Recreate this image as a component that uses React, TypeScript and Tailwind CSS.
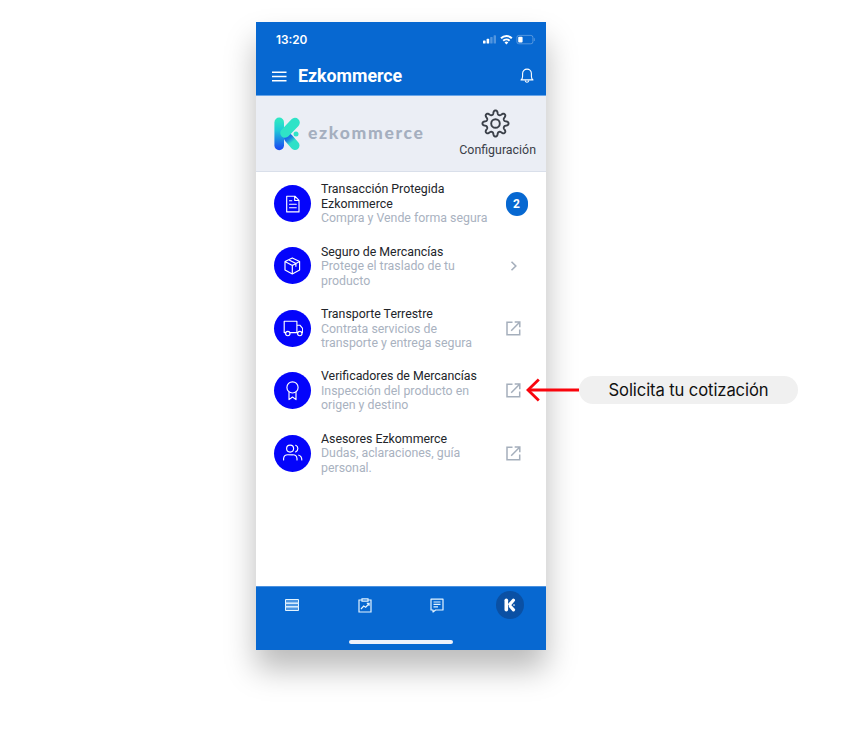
import React from "react";

// Outline of an eight-toothed wheel, teeth flattened at the tips.
const GEAR =
  Array.from({ length: 240 }, (_, i) => {
    const a = (i / 240) * Math.PI * 2;
    const r = 11.15 + (1.95 * Math.tanh(1.5 * Math.cos(8 * a) - 0.15)) / 0.9;
    return `${i ? "L" : "M"}${(14.5 + r * Math.sin(a)).toFixed(2)} ${(14.5 - r * Math.cos(a)).toFixed(2)}`;
  }).join("") + "z";

function StatusIcons() {
  return (
    <svg width="53" height="12" viewBox="0 0 53 12" fill="none">
      <g fill="#fff">
        <rect x="0" y="6.5" width="2.6" height="3" rx=".6" />
        <rect x="3.6" y="4.8" width="2.6" height="4.7" rx=".6" />
        <rect x="7.2" y="3" width="2.4" height="6.5" rx=".6" opacity=".3" />
        <rect x="10.6" y="1.3" width="2.4" height="8.2" rx=".6" opacity=".3" />
      </g>
      <g stroke="#fff" strokeWidth="2">
        <path d="M18 4.3a7.6 7.6 0 0 1 10.8 0" />
        <path d="M20.2 6.8a4.6 4.6 0 0 1 6.4 0" />
      </g>
      <path d="M23.4 10.5l-1.900-2a2.700 2.700 0 0 1 3.800 0z" fill="#fff" />
      <rect x="33.9" y="1.4" width="16" height="8.4" rx="2" stroke="#fff" strokeOpacity=".3" />
      <rect x="35.2" y="2.7" width="4.4" height="5.8" rx="1" fill="#fff" />
      <path d="M51.3 4.2v2.8" stroke="#fff" strokeOpacity=".3" />
    </svg>
  );
}

function Bell() {
  return (
    <svg width="14" height="16" viewBox="0 0 14 16" fill="none" stroke="#fff" strokeWidth="1.1" strokeLinejoin="round" strokeLinecap="round">
      <path d="M1 11.9c1.300-.9 1.600-2 1.600-3.600V5.500a4.400 4.400 0 0 1 8.800 0v2.800c0 1.600.3 2.700 1.600 3.600z" />
      <path d="M5.300 12.900a1.750 1.750 0 0 0 3.400 0" />
    </svg>
  );
}

function Logo() {
  return (
    <svg width="27" height="34" viewBox="0 0 27 34" fill="none" strokeLinecap="round">
      <defs>
        <linearGradient id="stem" gradientUnits="userSpaceOnUse" x1="0" y1="4" x2="0" y2="31">
          <stop offset="0" stopColor="#2ee6c5" />
          <stop offset=".35" stopColor="#20c9d8" />
          <stop offset="1" stopColor="#1a50f0" />
        </linearGradient>
        <linearGradient id="leg" gradientUnits="userSpaceOnUse" x1="13" y1="18" x2="21" y2="28">
          <stop offset="0" stopColor="#1b55ee" />
          <stop offset=".35" stopColor="#1d86df" />
          <stop offset=".7" stopColor="#2ee0c8" />
        </linearGradient>
      </defs>
      <path d="M5.200 5.400v23" stroke="url(#stem)" strokeWidth="9.600" />
      <path d="M14.500 21l6.500 7.500" stroke="url(#leg)" strokeWidth="9" />
      <path d="M21 5.600L11 16" stroke="#2fe3c7" strokeWidth="9.600" />
      <circle cx="22" cy="17" r="2.500" fill="#2fe3c7" />
    </svg>
  );
}

const thin = {
  width: 20,
  height: 20,
  viewBox: "0 0 20 20",
  fill: "none",
  stroke: "#fff",
  strokeWidth: 1.15,
  strokeLinecap: "round" as const,
  strokeLinejoin: "round" as const,
};

const DocIcon = () => (
  <svg {...thin}>
    <path d="M3.700 2.200h8.200l4.100 4.100v11.600h-12.300zM11.700 2.300v4.200h4.200M6.500 6.700h2.300M6.500 10.200h6.800M6.500 13.700h6.800" />
  </svg>
);
const BoxIcon = () => (
  <svg {...thin}>
    <path d="M9.300 1.900l7.300 3.700v8.500l-7.300 3.900-7.300-3.900V5.600zM2 5.600l7.300 3.800 7.300-3.800M9.300 9.400V18M5.600 3.800l7.300 3.800v2.700" />
  </svg>
);
const TruckIcon = () => (
  <svg {...thin}>
    <path d="M2.600 14.600H1.200V3.200h12.700v11.400H7M13.900 7.200h3l2.700 3.300v4.100h-.9M14.800 14.600h-.9" />
    <circle cx="4.800" cy="15.500" r="2.200" />
    <circle cx="16.800" cy="15.500" r="2.200" />
  </svg>
);
const AwardIcon = () => (
  <svg {...thin}>
    <circle cx="9.500" cy="6.400" r="5.600" />
    <path d="M6 11.200v7.400L9.500 16l3.500 2.600v-7.400" />
  </svg>
);
const PeopleIcon = () => (
  <svg {...thin}>
    <circle cx="7.100" cy="5.600" r="3.500" />
    <path d="M.6 17v-1.500a4.200 4.200 0 0 1 4.200-3.700h5a4.200 4.200 0 0 1 4.200 3.700V17M12.700 2.300a3.600 3.600 0 0 1 0 6.600M15.800 12.200c2 .5 3 2 3 4.800" />
  </svg>
);

const Badge = () => (
  <span className="flex h-[24px] w-[22px] items-center justify-center rounded-full bg-[#0768d1] pr-[1px] text-[12px] font-bold text-white">
    2
  </span>
);
const Chevron = () => (
  <svg className="mr-[10px]" width="8" height="12" viewBox="0 0 8 12" fill="none" stroke="#a5afbc" strokeWidth="1.600">
    <path d="M1.500 1.800l4.300 4.200-4.300 4.200" />
  </svg>
);
const OpenIcon = () => (
  <svg className="mr-[7px]" width="15" height="15" viewBox="0 0 15 15" fill="none" stroke="#a5afbc" strokeWidth="1.500">
    <path d="M6.500 1.300H1v12.500h12.700V8.500M8.700 1h5.100v5.200M13.600 1.300L5.200 9.700" />
  </svg>
);

const rows = [
  { icon: <DocIcon />, title: ["Transacción Protegida", "Ezkommerce"], text: ["Compra y Vende forma segura"], end: <Badge /> },
  { icon: <BoxIcon />, title: ["Seguro de Mercancías"], text: ["Protege el traslado de tu", "producto"], end: <Chevron /> },
  { icon: <TruckIcon />, title: ["Transporte Terrestre"], text: ["Contrata servicios de", "transporte y entrega segura"], end: <OpenIcon /> },
  { icon: <AwardIcon />, title: ["Verificadores de Mercancías"], text: ["Inspección del producto en", "origen y destino"], end: <OpenIcon /> },
  { icon: <PeopleIcon />, title: ["Asesores Ezkommerce"], text: ["Dudas, aclaraciones, guía", "personal."], end: <OpenIcon /> },
];

function TabBar() {
  return (
    <footer className="flex h-[64px] flex-col items-center border-t border-[#4b91df] bg-[#0768d1]">
      <div className="flex h-[36px] w-full items-center">
        <div className="flex flex-1 justify-center">
          <svg width="16" height="14" viewBox="0 0 16 14" fill="#4d96e2" stroke="#e4f4ff" strokeWidth="1">
            <path d="M1.500 1.500h13v3.700h-13zM1.500 5.200h13v3.600h-13zM1.500 8.800h13v3.700h-13z" />
          </svg>
        </div>
        <div className="flex flex-1 justify-center">
          <svg width="14" height="15" viewBox="0 0 14 15" fill="none" stroke="#e4f4ff" strokeWidth="1.200">
            <path d="M3.500 2H1v12h12V2h-2.500M4 .8h6v2.400H4zM3 11l2.700-3 2 1.200 3-3.200M8.800 5.400h2.300v2.300" />
          </svg>
        </div>
        <div className="flex flex-1 justify-center">
          <svg width="14" height="15" viewBox="0 0 14 15" fill="none" stroke="#e4f4ff" strokeWidth="1.200" strokeLinejoin="round">
            <path d="M1 1.200h12v10.800H5.600L3 14v-2H1zM3.500 4h7M3.500 6.400h7M3.500 8.800h4.500" />
          </svg>
        </div>
        <div className="flex flex-1 justify-center">
          <span className="flex h-[28px] w-[28px] items-center justify-center rounded-full bg-[#0a50a4]">
            <svg width="12" height="14" viewBox="0 0 12 14" fill="none" stroke="#fff" strokeLinecap="round">
              <path d="M2.300 2.200v9.500" strokeWidth="3.600" />
              <path d="M9.400 2.200L5.800 6.400M6.500 8.500l3 3.300" strokeWidth="3.200" />
              <circle cx="10" cy="7.100" r=".8" fill="#fff" stroke="none" />
            </svg>
          </span>
        </div>
      </div>
      <div className="mt-[17px] h-[4px] w-[104px] rounded-full bg-[#eef1fa]" />
    </footer>
  );
}

export default function App() {
  return (
    <div className="relative flex h-[731px] w-[849px] bg-white font-['Roboto',sans-serif]">
      <main className="mt-[22px] ml-[256px] flex h-[628px] w-[290px] flex-col bg-white shadow-[0_19px_29px_rgba(0,0,0,0.27)]">
        <header className="h-[74px] border-b border-[#69a5e8] bg-[#0768d1] text-white">
          <div className="flex h-[36px] items-center justify-between pr-[10px] pl-[20px]">
            <span className="mt-[2px] font-['Inter',sans-serif] text-[11.800px] font-semibold">13:20</span>
            <StatusIcons />
          </div>
          <div className="flex h-[36px] items-center pr-[12px] pl-[16px]">
            <svg width="15" height="11" viewBox="0 0 15 11" stroke="#fff" strokeWidth="1.400">
              <path d="M0 1.200h14.500M0 5.500h14.500M0 9.800h14.500" />
            </svg>
            <h1 className="ml-[11px] flex-1 text-[17.800px] font-bold">Ezkommerce</h1>
            <Bell />
          </div>
        </header>
        <section className="flex h-[76px] items-center justify-between border-b border-[#d9dfea] bg-[#ebeef5] pr-[10px] pl-[18px]">
          <div className="flex items-center">
            <Logo />
            <span className="ml-[7px] font-['Lato',sans-serif] text-[17.500px] font-black tracking-[1.700px] text-[#a5afbf]">ezkommerce</span>
          </div>
          <div className="flex flex-col items-center text-[#3b4049]">
            <svg className="mr-[4px]" width="29" height="29" viewBox="0 0 29 29" fill="none" stroke="currentColor" strokeWidth="1.900">
              <path d={GEAR} strokeLinejoin="round" />
              <circle cx="14.500" cy="14.500" r="4.300" />
            </svg>
            <span className="mt-[4px] text-[12.400px] leading-[16px]">Configuración</span>
          </div>
        </section>
        <ul className="mt-[0.400px] flex-1">
          {rows.map((row) => (
            <li key={row.title[0]} className="flex h-[62.400px] items-center pr-[18px] pl-[18px]">
              <span className="flex h-[37px] w-[37px] shrink-0 items-center justify-center rounded-full bg-[#0404fb]">{row.icon}</span>
              <div className="ml-[10px] flex-1 pt-[0.800px] text-[12.350px] leading-[14.500px] whitespace-nowrap">
                {row.title.map((t) => (
                  <p key={t} className="text-[#22252a]">{t}</p>
                ))}
                {row.text.map((t) => (
                  <p key={t} className="text-[#a9b2bf]">{t}</p>
                ))}
              </div>
              {row.end}
            </li>
          ))}
        </ul>
        <TabBar />
      </main>
      <aside className="absolute top-[376px] left-[526px] flex items-center">
        <svg width="53" height="28" viewBox="0 0 53 28" fill="none" stroke="#f9050d" strokeWidth="2.800">
          <path d="M2 14h51" />
          <path d="M12.800 3.500L2 14l10.800 10.500" />
        </svg>
        <div className="flex h-[28px] w-[219px] items-center justify-center rounded-full bg-[#f0f0f0] pt-[1px] font-['Inter',sans-serif] text-[16.600px] font-normal tracking-[-0.100px] whitespace-nowrap text-[#111]">
          Solicita tu cotización
        </div>
      </aside>
    </div>
  );
}
